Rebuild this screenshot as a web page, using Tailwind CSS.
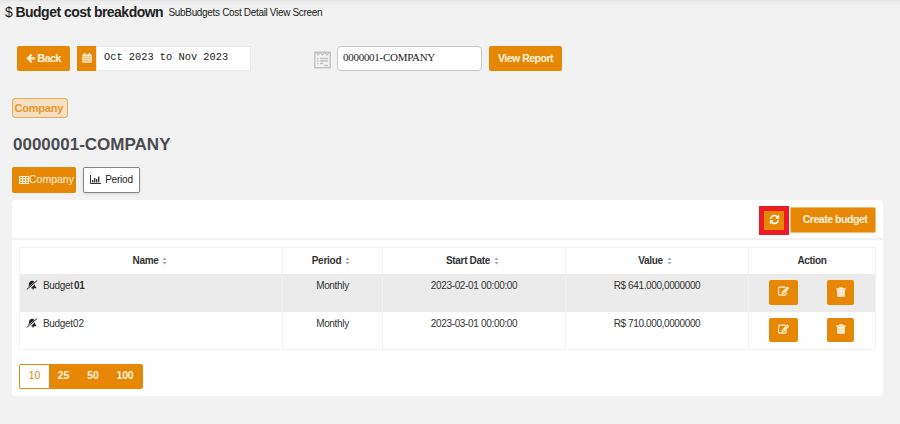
<!DOCTYPE html>
<html lang="en">
<head>
<meta charset="utf-8">
<title>Budget cost breakdown</title>
<script src="https://cdn.jsdelivr.net/npm/@tailwindcss/browser@4"></script>
</head>
<body class="h-[424px] w-[900px] overflow-hidden bg-[#f2f2f2] font-['Liberation_Sans',sans-serif] text-[10px] text-[#333] whitespace-nowrap">
<svg class="hidden">
  <symbol id="edit" viewBox="0 0 1792 1792"><path stroke="currentColor" stroke-width="70" d="M888 1184l116-116-152-152-116 116v56h96v96h56zm440-720q-16-16-33 1l-350 350q-17 17-1 33t33-1l350-350q17-17 1-33zm80 594v190q0 119-84.5 203.5t-203.5 84.5h-832q-119 0-203.5-84.5t-84.5-203.5v-832q0-119 84.5-203.5t203.5-84.5h832q63 0 117 25 15 7 18 23 3 17-9 29l-49 49q-14 14-32 8-23-6-45-6h-832q-66 0-113 47t-47 113v832q0 66 47 113t113 47h832q66 0 113-47t47-113v-126q0-13 9-22l64-64q15-15 35-7t20 29zm-96-738l288 288-672 672h-288v-288zm444 132l-92 92-288-288 92-92q28-28 68-28t68 28l152 152q28 28 28 68t-28 68z"/></symbol>
  <symbol id="trash" viewBox="0 0 10 10"><path d="M3 1.2 3.600.2h2.800l.6 1h2.600v1.600H.4V1.200zM1.200 3h7.600v5.800q0 1-1 1H2.200q-1 0-1-1z"/><path d="M3.400 4v4.500M5 4v4.500M6.600 4v4.500" stroke="#e68805" stroke-width=".5" opacity=".45"/></symbol>
  <symbol id="sort" viewBox="0 0 5 8"><path d="M.3 3 2.500.4 4.700 3zM.3 5 2.500 7.600 4.700 5z"/></symbol>
  <symbol id="bell" viewBox="0 0 12 10"><path d="M1.800 7.400C3 6.400 2.800 4.600 3.100 3.200 3.400 1.700 4.700.8 5.700.7 6.800.7 7.900 1.100 8.400 2zM8.800 4.200C8.900 5.600 9.300 6.600 10.300 7.500V8.200H4.900zM6 8.500H8.200Q8 9.600 7 9.600 6.200 9.600 6 8.500z"/><path d="M.7 9.500 11.200.5" stroke="currentColor" stroke-width="1"/></symbol>
</svg>

<header class="flex h-[25px] items-center border-t border-[#e6e6e6] bg-gradient-to-b from-[#ebebeb] to-[#f2f2f2] to-20% pb-[2px] pl-[5px] text-[#222]">
  <span class="w-[10.500px] text-[14px] leading-[20px]">$</span>
  <h1 class="w-[153px] text-[14px] leading-[20px] font-bold tracking-[-0.530px]">Budget cost breakdown</h1>
  <small class="pt-[2px] text-[10px] leading-[18px] tracking-[-0.330px]">SubBudgets Cost Detail View Screen</small>
</header>

<section class="mt-[21px] flex h-[25px] items-center pl-[17px]">
  <button class="flex h-[25px] w-[53px] items-center justify-center gap-px rounded-[2px] bg-[#e68805] pb-px text-[11px] font-bold tracking-[-0.700px] text-[#fff3df]">
    <svg class="size-[10px]" viewBox="0 0 1664 1792" fill="currentColor"><path d="M1536 896v128q0 53-32.500 90.500t-84.500 37.500h-704l293 294q38 36 38 90t-38 90l-75 76q-37 37-90 37-52 0-91-37l-651-652q-37-37-37-90 0-52 37-91l651-650q38-38 91-38 52 0 90 38l75 74q38 38 38 91t-38 91l-293 293h704q52 0 84.500 37.500t32.500 90.500z"/></svg>
    <span>Back</span>
  </button>
  <div class="ml-[7px] flex h-[25px] w-[19px] items-center justify-center bg-[#e68805] pb-px">
    <svg class="size-[10px]" viewBox="0 0 10 10"><path d="M.3 1.500h9.400v8.200H.3z" fill="#fff3df"/><path d="M2.700 0v2.200M7.300 0v2.200" stroke="#fff3df" stroke-width="1.400"/><path d="M.5 3.500h9M1 5.500h8M1 7.500h8M2.700 3.500v6M5 3.500v6M7.300 3.500v6" stroke="#e68805" stroke-width=".5" opacity=".8"/></svg>
  </div>
  <div class="flex h-[25px] w-[155px] items-center border border-[#e8e8e8] bg-white pb-px pl-[7px] font-['Liberation_Mono',monospace] text-[10.350px] text-[#222]">Oct 2023 to Nov 2023</div>
  <svg class="mt-[3px] ml-[63px] h-[18px] w-[17px]" viewBox="0 0 17 18" fill="none" stroke="#c2c4c6"><path d="M.8 1.200h15.400v15.600H.8z" stroke-width="1.500"/><path d="M2 1.500 4 4l2.200-2.500L8.500 4l2.300-2.500L13 4l2-2.500M3 7.500h1.600M6 7.500h8M3 10h1.600M6 10h8M3 12.500h1.600M6 12.500h3M10 14.500h4" stroke-width="1.300"/></svg>
  <div class="ml-[6px] flex h-[25px] w-[145px] items-center rounded-[4px] border border-[#c9c9c9] bg-white pb-[3px] pl-[5px] font-['Liberation_Serif',serif] text-[11px] tracking-[-0.280px] text-[#222]">0000001-COMPANY</div>
  <button class="ml-[7px] h-[25px] w-[73px] rounded-[2px] bg-[#e68805] text-[10.500px] font-bold tracking-[-0.480px] text-[#fff3df]">View Report</button>
</section>

<div class="mt-[27px] ml-[12px] flex h-[20px] w-[56px] items-center rounded-[3px] border border-[#ebab52] bg-[#f6e0c4] pl-[1.500px] text-[11px] font-bold tracking-[-0.200px] text-[#e8962a]">Company</div>
<h2 class="mt-[15px] ml-[13px] h-[24px] text-[17px] leading-[24px] font-bold text-[#4b4b52]">0000001-COMPANY</h2>

<nav class="mt-[10px] flex h-[26px] pl-[12px]">
  <button class="flex w-[64px] items-center justify-center rounded-[2px] bg-[#e68805] pl-[5px] text-[10.500px] text-[#fff3df]">
    <svg class="h-[8px] w-[10px] shrink-0" viewBox="0 0 10 8"><path d="M.5.5h9v7h-9zM.5 2.800h9M.5 5.200h9M3.500.5v7M6.500.5v7" fill="none" stroke="currentColor" stroke-width="1.100"/></svg>
    <span>Company</span>
  </button>
  <button class="ml-[7px] flex w-[57px] items-center justify-center gap-[4px] rounded-[2px] border border-[#858585] bg-white pb-px text-[10px] tracking-[-0.200px] text-[#222] shadow-sm">
    <svg class="h-[9px] w-[11px]" viewBox="0 0 11 9"><path d="M.5 0v8.500H11" fill="none" stroke="#333"/><path d="M2.700 5v2.500M4.700 3v4.500M6.700 4v3.500M8.700 1.500v6" stroke="#333" stroke-width="1.300"/></svg>
    <span>Period</span>
  </button>
</nav>

<main class="mt-[7px] ml-[12px] h-[196px] w-[871px] rounded-[4px] bg-white">
  <div class="flex h-[40px] justify-end border-b-[2px] border-[#f2f2f2] pt-[6px] pr-[7px]">
    <button class="flex h-[29px] w-[30px] items-center justify-center border-[5px] border-[#ed1c24] bg-[#e68805] pb-[2px] text-white">
      <svg class="size-[11px] shrink-0" viewBox="0 0 1792 1792" fill="currentColor"><path d="M1639 1056q0 5-1 7-64 268-268 434.500t-478 166.500q-146 0-282.500-55t-243.500-157l-129 129q-19 19-45 19t-45-19-19-45v-448q0-26 19-45t45-19h448q26 0 45 19t19 45-19 45l-137 137q71 66 161 102t187 36q134 0 250-65t186-179q11-17 53-117 8-23 30-23h192q13 0 22.500 9.500t9.500 22.500zm25-800v448q0 26-19 45t-45 19h-448q-26 0-45-19t-19-45 19-45l138-138q-148-137-349-137-134 0-250 65t-186 179q-11 17-53 117-8 23-30 23h-199q-13 0-22.500-9.500t-9.500-22.500v-7q65-268 270-434.500t480-166.500q146 0 284 55.500t245 156.500l130-129q19-19 45-19t45 19 19 45z"/></svg>
    </button>
    <button class="mt-px ml-px h-[26px] w-[86px] rounded-[2px] border border-[#f2bd70] bg-[#e68805] pb-px pl-[4px] text-[10.500px] font-bold tracking-[-0.450px] text-[#fff3df]">Create budget</button>
  </div>

  <div class="mt-[7px] ml-[7px] grid h-[103px] w-[857px] grid-cols-[263px_100px_183px_183px_126px] grid-rows-[26px_38px_37px] border border-[#f2f2f2] text-center tracking-[-0.330px] text-[#333] [&>*]:border-r [&>*]:border-[#f2f2f2] [&>*:nth-child(5n)]:border-r-0">
    <div class="flex items-center justify-center gap-[4px] pr-[2px] pb-px font-bold">Name<svg class="h-[8px] w-[5px] fill-[#aaa]"><use href="#sort"/></svg></div>
    <div class="flex items-center justify-center gap-[4px] pr-[3px] pb-px font-bold tracking-[-0.250px]">Period<svg class="h-[8px] w-[5px] fill-[#aaa]"><use href="#sort"/></svg></div>
    <div class="flex items-center justify-center gap-[4px] pr-[3px] pb-px font-bold">Start Date<svg class="h-[8px] w-[5px] fill-[#aaa]"><use href="#sort"/></svg></div>
    <div class="flex items-center justify-center gap-[4px] pr-[4px] pb-px font-bold">Value<svg class="h-[8px] w-[5px] fill-[#aaa]"><use href="#sort"/></svg></div>
    <div class="flex items-center justify-center pb-px font-bold">Action</div>

    <div class="flex items-start bg-[#ebebeb] pt-[6px] pl-[6px]"><svg class="h-[10px] w-[12px] fill-current text-[#222]"><use href="#bell"/></svg><span class="ml-[5px] w-[31px] text-left leading-[11px]">Budget</span><span class="leading-[11px] font-bold">01</span></div>
    <div class="bg-[#ebebeb] pt-[6px] leading-[11px]">Monthly</div>
    <div class="bg-[#ebebeb] pt-[6px] leading-[11px]">2023-02-01 00:00:00</div>
    <div class="bg-[#ebebeb] pt-[6px] leading-[11px] tracking-[-0.380px]">R$ 641.000,0000000</div>
    <div class="flex items-start bg-[#ebebeb] pt-[6px] pl-[20px]">
      <button class="flex h-[25px] w-[29px] items-center justify-center rounded-[2px] bg-[#e68805] pb-[2px] text-[#fff3df]"><svg class="size-[11px] fill-current"><use href="#edit"/></svg></button>
      <button class="ml-[29px] flex h-[25px] w-[27px] items-center justify-center rounded-[2px] bg-[#e68805] pb-[2px] text-[#fff3df]"><svg class="h-[10px] w-[10px] fill-current"><use href="#trash"/></svg></button>
    </div>

    <div class="flex items-start pt-[6px] pl-[6px]"><svg class="h-[10px] w-[12px] fill-current text-[#222]"><use href="#bell"/></svg><span class="ml-[5px] w-[30px] text-left leading-[11px]">Budget</span><span class="leading-[11px] tracking-normal">02</span></div>
    <div class="pt-[6px] leading-[11px]">Monthly</div>
    <div class="pt-[6px] leading-[11px]">2023-03-01 00:00:00</div>
    <div class="pt-[6px] leading-[11px] tracking-[-0.380px]">R$ 710.000,0000000</div>
    <div class="flex items-start pt-[6px] pl-[20px]">
      <button class="flex h-[24px] w-[29px] items-center justify-center rounded-[2px] bg-[#e68805] pb-[2px] text-[#fff3df]"><svg class="size-[11px] fill-current"><use href="#edit"/></svg></button>
      <button class="ml-[29px] flex h-[24px] w-[27px] items-center justify-center rounded-[2px] bg-[#e68805] pb-[2px] text-[#fff3df]"><svg class="h-[10px] w-[10px] fill-current"><use href="#trash"/></svg></button>
    </div>
  </div>

  <div class="mt-[14px] ml-[7px] flex h-[25px] w-[124px] overflow-hidden rounded-[2px] border border-[#e68805] bg-[#e68805] text-[10.500px] font-bold tracking-[-0.200px] text-[#fff3df]">
    <button class="w-[29px] bg-white pb-px font-normal text-[#e68805]">10</button>
    <button class="w-[29px] pb-px">25</button>
    <button class="w-[30px] pb-px">50</button>
    <button class="w-[34px] pb-px">100</button>
  </div>
</main>
</body>
</html>
